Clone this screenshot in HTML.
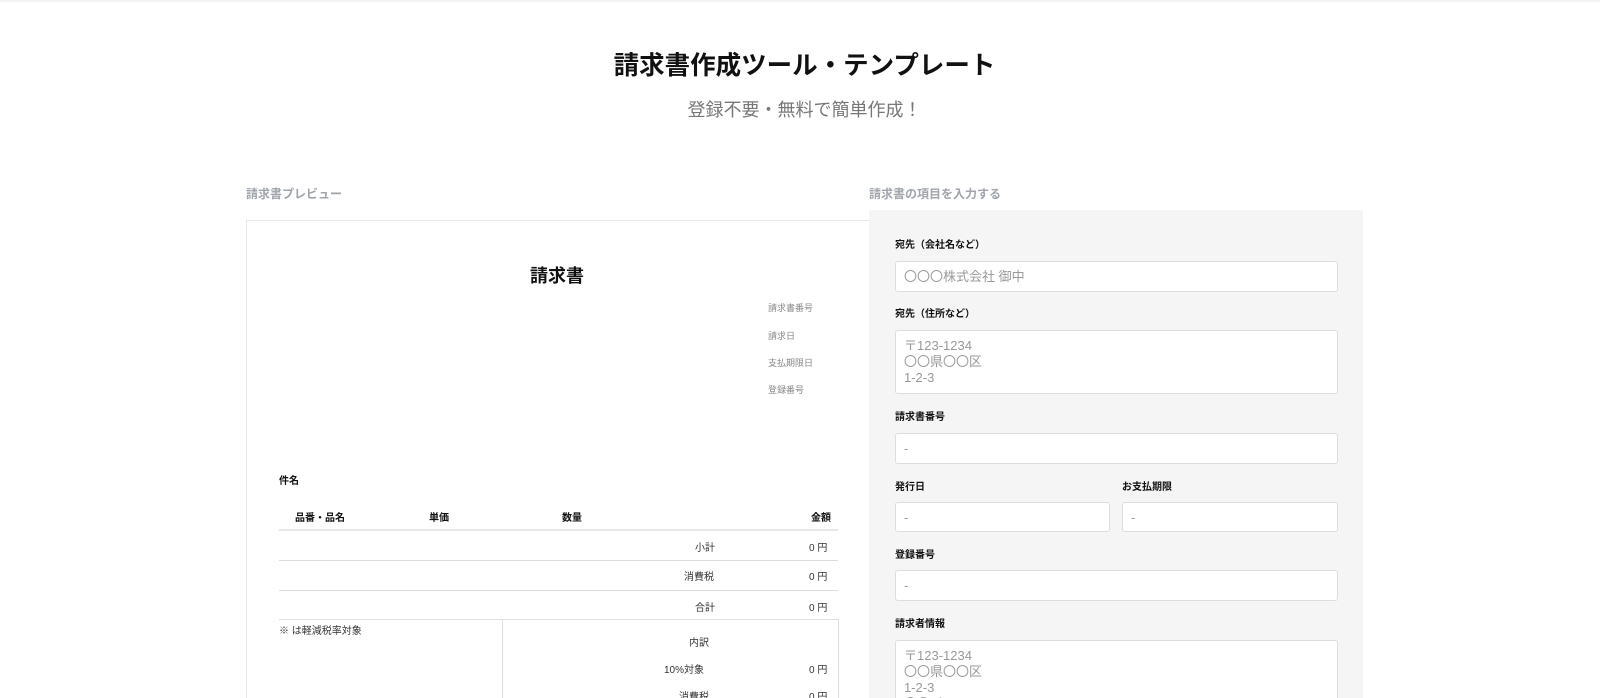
<!DOCTYPE html>
<html style="overflow:hidden;height:698px"><head><meta charset="utf-8"><style>
*{box-sizing:border-box;margin:0;padding:0}
body{width:1600px;height:698px;overflow:hidden;background:#fff;font-family:"Liberation Sans","Noto Sans CJK JP",sans-serif;color:#222;position:relative}
.a{position:absolute;white-space:nowrap}
.topl{position:absolute;left:0;top:0;width:1600px;height:3px;background:linear-gradient(#eee,#fff)}
h1{position:absolute;left:0;width:1609px;top:45px;text-align:center;font-size:25.5px;font-weight:bold;color:#111}
.sub{position:absolute;left:0;width:1609px;top:96px;text-align:center;font-size:18px;color:#777}
.sec{font-size:12px;color:#a0a4ab;font-weight:bold}
.prev{position:absolute;left:246px;top:220px;width:624px;height:478px;border:1px solid #e8e8e8;border-right:none;border-bottom:none}
.panel{position:absolute;left:869px;top:210px;width:494px;height:488px;background:#f5f5f5}
.sm{font-size:9px;color:#888}
.t{font-size:10px;color:#333}
.b{font-weight:bold;color:#111}
.hl{position:absolute;left:279px;width:559px;height:1px;background:#ddd}
.lab{font-size:10px;font-weight:bold;color:#111}
.in{position:absolute;background:#fff;border:1px solid #ddd;border-radius:3px;font-size:13px;color:#999;padding:7px 8px;line-height:16px;overflow:hidden}
</style></head><body>
<div class="topl"></div>
<h1>請求書作成ツール・テンプレート</h1>
<div class="sub">登録不要・無料で簡単作成！</div>
<div class="a sec" style="left:246px;top:185px">請求書プレビュー</div>
<div class="a sec" style="left:869px;top:185px">請求書の項目を入力する</div>
<div class="prev"></div>
<div class="a b" style="left:530px;top:262px;font-size:18px">請求書</div>
<div class="a sm" style="left:768px;top:301px">請求書番号</div>
<div class="a sm" style="left:768px;top:329px">請求日</div>
<div class="a sm" style="left:768px;top:356px">支払期限日</div>
<div class="a sm" style="left:768px;top:383px">登録番号</div>
<div class="a t b" style="left:279px;top:472px">件名</div>
<div class="a t b" style="left:295px;top:509px">品番・品名</div>
<div class="a t b" style="left:429px;top:509px">単価</div>
<div class="a t b" style="left:562px;top:509px">数量</div>
<div class="a t b" style="left:811px;top:509px">金額</div>
<div class="hl" style="top:529px;height:2px;background:#e8e8e8"></div>
<div class="a t" style="left:695px;top:539px">小計</div><div class="a t" style="left:809px;top:539px">0 円</div>
<div class="hl" style="top:560px"></div>
<div class="a t" style="left:684px;top:568px">消費税</div><div class="a t" style="left:809px;top:568px">0 円</div>
<div class="hl" style="top:590px"></div>
<div class="a t" style="left:695px;top:599px">合計</div><div class="a t" style="left:809px;top:599px">0 円</div>
<div class="hl" style="top:619px"></div>
<div style="position:absolute;left:502px;top:619px;width:1px;height:79px;background:#ddd"></div>
<div style="position:absolute;left:838px;top:619px;width:1px;height:79px;background:#ddd"></div>
<div class="a t" style="left:279px;top:622px">※ は軽減税率対象</div>
<div class="a t" style="left:689px;top:634px">内訳</div>
<div class="a t" style="left:664px;top:661px">10%対象</div><div class="a t" style="left:809px;top:661px">0 円</div>
<div class="a t" style="left:679px;top:688px">消費税</div><div class="a t" style="left:809px;top:688px">0 円</div>
<div class="panel"></div>
<div class="a lab" style="left:895px;top:236px">宛先（会社名など）</div>
<div class="in" style="left:895px;top:261px;width:443px;height:31px">〇〇〇株式会社 御中</div>
<div class="a lab" style="left:895px;top:305px">宛先（住所など）</div>
<div class="in" style="left:895px;top:330px;width:443px;height:64px">〒123-1234<br>〇〇県〇〇区<br>1-2-3</div>
<div class="a lab" style="left:895px;top:408px">請求書番号</div>
<div class="in" style="left:895px;top:433px;width:443px;height:31px">-</div>
<div class="a lab" style="left:895px;top:478px">発行日</div>
<div class="a lab" style="left:1122px;top:478px">お支払期限</div>
<div class="in" style="left:895px;top:502px;width:215px;height:30px">-</div>
<div class="in" style="left:1122px;top:502px;width:216px;height:30px">-</div>
<div class="a lab" style="left:895px;top:546px">登録番号</div>
<div class="in" style="left:895px;top:570px;width:443px;height:31px">-</div>
<div class="a lab" style="left:895px;top:615px">請求者情報</div>
<div class="in" style="left:895px;top:640px;width:443px;height:58px;border-bottom:none;border-radius:3px 3px 0 0">〒123-1234<br>〇〇県〇〇区<br>1-2-3<br>〇〇ビル</div>
</body></html>
